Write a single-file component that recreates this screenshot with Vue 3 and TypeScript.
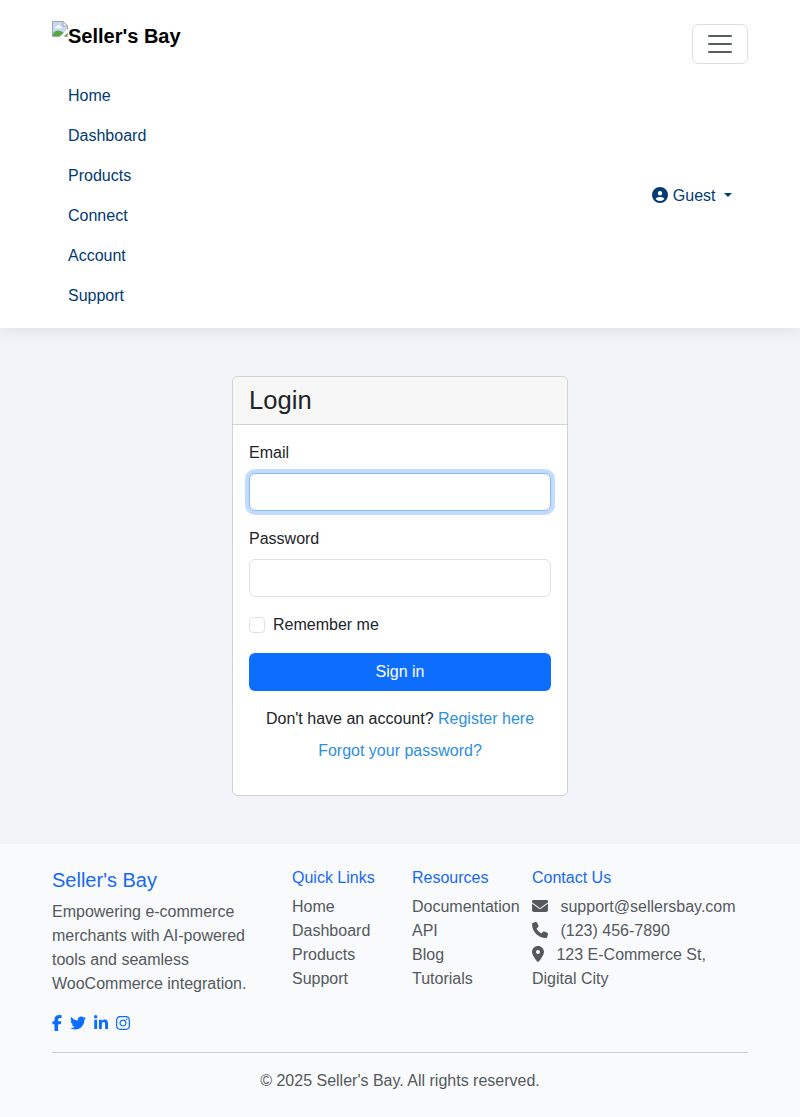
<script setup lang="ts">
interface Icon {
  name: string
  width: number
  path: string
}

interface Contact {
  icon: Icon
  text: string
}

const navLinks: string[] = ['Home', 'Dashboard', 'Products', 'Connect', 'Account', 'Support']

const linkGroups: { title: string; links: string[] }[] = [
  { title: 'Quick Links', links: ['Home', 'Dashboard', 'Products', 'Support'] },
  { title: 'Resources', links: ['Documentation', 'API', 'Blog', 'Tutorials'] },
]

const social: Icon[] = [
  {
    name: 'facebook',
    width: 320,
    path: 'M80 299.3V512H196V299.3h86.5l18-97.8H196V166.9c0-51.7 20.3-71.5 72.7-71.5c16.3 0 29.4 .4 37 1.200V7.900C291.4 4 256.4 0 236.2 0C129.3 0 80 50.500 80 159.4v42.100H14v97.800H80z',
  },
  {
    name: 'twitter',
    width: 512,
    path: 'M459.37 151.716c.325 4.548.325 9.097.325 13.645 0 138.72-105.583 298.558-298.558 298.558-59.452 0-114.68-17.219-161.137-47.106 8.447.974 16.568 1.299 25.34 1.299 49.055 0 94.213-16.568 130.274-44.832-46.132-.975-84.792-31.188-98.112-72.772 6.498.974 12.995 1.624 19.818 1.624 9.421 0 18.843-1.3 27.614-3.573-48.081-9.747-84.143-51.98-84.143-102.985v-1.299c13.969 7.797 30.214 12.67 47.431 13.319-28.264-18.843-46.781-51.005-46.781-87.391 0-19.492 5.197-37.36 14.294-52.954 51.655 63.675 129.3 105.258 216.365 109.807-1.624-7.797-2.599-15.918-2.599-24.04 0-57.828 46.782-104.934 104.934-104.934 30.213 0 57.502 12.67 76.67 33.137 23.715-4.548 46.456-13.32 66.599-25.34-7.798 24.366-24.366 44.833-46.132 57.827 21.117-2.273 41.584-8.122 60.426-16.243-14.292 20.791-32.161 39.308-52.628 54.253z',
  },
  {
    name: 'linkedin',
    width: 448,
    path: 'M100.28 448H7.4V148.9h92.88zM53.79 108.1C24.09 108.1 0 83.5 0 53.8a53.79 53.79 0 0 1 107.58 0c0 29.7-24.1 54.3-53.79 54.3zM447.9 448h-92.68V302.4c0-34.7-.7-79.2-48.29-79.2-48.29 0-55.69 37.7-55.69 76.7V448h-92.78V148.9h89.08v40.8h1.3c12.4-23.5 42.69-48.3 87.88-48.3 94 0 111.28 61.9 111.28 142.3V448z',
  },
  {
    name: 'instagram',
    width: 448,
    path: 'M224.1 141c-63.6 0-114.9 51.3-114.9 114.9s51.3 114.9 114.9 114.9S339 319.5 339 255.9 287.7 141 224.1 141zm0 189.6c-41.1 0-74.7-33.5-74.7-74.7s33.5-74.7 74.7-74.7 74.7 33.5 74.7 74.7-33.6 74.7-74.7 74.7zm146.4-194.3c0 14.9-12 26.8-26.8 26.8-14.9 0-26.8-12-26.8-26.8s12-26.8 26.8-26.8 26.8 12 26.8 26.8zm76.1 27.2c-1.7-35.9-9.9-67.7-36.2-93.9-26.2-26.2-58-34.4-93.9-36.2-37-2.1-147.9-2.1-184.9 0-35.8 1.7-67.6 9.9-93.9 36.1s-34.4 58-36.2 93.9c-2.1 37-2.1 147.9 0 184.9 1.7 35.9 9.9 67.7 36.2 93.9s58 34.4 93.9 36.2c37 2.1 147.9 2.1 184.9 0 35.9-1.7 67.7-9.9 93.9-36.2 26.2-26.2 34.4-58 36.2-93.9 2.1-37 2.1-147.8 0-184.8zM398.8 388c-7.8 19.6-22.9 34.7-42.6 42.6-29.5 11.7-99.5 9-132.1 9s-102.7 2.6-132.1-9c-19.6-7.8-34.7-22.9-42.6-42.6-11.7-29.5-9-99.5-9-132.1s-2.6-102.7 9-132.1c7.8-19.6 22.9-34.7 42.6-42.6 29.5-11.7 99.5-9 132.1-9s102.7-2.6 132.1 9c19.6 7.8 34.7 22.9 42.6 42.6 11.7 29.5 9 99.5 9 132.1s2.7 102.7-9 132.1z',
  },
]

const contacts: Contact[] = [
  {
    icon: {
      name: 'envelope',
      width: 512,
      path: 'M48 64C21.5 64 0 85.5 0 112c0 15.1 7.1 29.3 19.2 38.4L236.8 313.6c11.4 8.5 27 8.5 38.4 0L492.8 150.4c12.1-9.1 19.2-23.3 19.2-38.4c0-26.5-21.5-48-48-48H48zM0 176V384c0 35.3 28.7 64 64 64H448c35.3 0 64-28.7 64-64V176L294.4 339.2c-22.8 17.1-54 17.1-76.8 0L0 176z',
    },
    text: 'support@sellersbay.com',
  },
  {
    icon: {
      name: 'phone',
      width: 512,
      path: 'M164.9 24.6c-7.7-18.6-28-28.5-47.4-23.2l-88 24C12.1 30.2 0 46 0 64C0 311.4 200.6 512 448 512c18 0 33.8-12.1 38.6-29.5l24-88c5.3-19.4-4.6-39.7-23.2-47.4l-96-40c-16.3-6.8-35.2-2.1-46.3 11.6L304.7 368C234.3 334.7 177.3 277.7 144 207.3L193.3 167c13.7-11.2 18.4-30 11.6-46.3l-40-96z',
    },
    text: '(123) 456-7890',
  },
  {
    icon: {
      name: 'location',
      width: 384,
      path: 'M215.7 499.2C267 435 384 279.4 384 192C384 86 298 0 192 0S0 86 0 192c0 87.4 117 243 168.3 307.2c12.3 15.3 35.1 15.3 47.4 0zM192 128a64 64 0 1 1 0 128 64 64 0 1 1 0-128z',
    },
    text: '123 E-Commerce St, Digital City',
  },
]
</script>

<template>
  <div class="page">
    <header class="navbar">
      <div class="bar">
        <a class="brand">
          <svg class="logo" width="16" height="16" viewBox="0 0 16 16" aria-hidden="true">
            <path d="M.5.5H11L15.5 5v3L8 15.5H.5z" fill="#c6d8f5" />
            <path d="M3 7.2c0-1 .8-1.7 1.7-1.7C5 4.600 5.700 4 6.600 4c1.100 0 1.900.8 2 1.800.8 0 1.400.6 1.400 1.400H3z" fill="#fff" />
            <path d="M1 15v-2.500C3 9.800 6 8.700 9.500 10.500L11.800 12l-3.500 3z" fill="#58a942" />
            <path d="M.5 15.500V.5H11L15.500 5v3.500M.5 15.500H8" fill="none" stroke="#a0a4a8" />
            <path d="M11 .5V5h4.500z" fill="#fff" stroke="#a0a4a8" />
            <path d="M7.500 16 16 8v2.500L10.500 16z" fill="#fff" />
            <path d="M12 15.500h3.500V12z" fill="#58a942" stroke="#a0a4a8" stroke-width=".6" />
          </svg><span>Seller's Bay</span>
        </a>
        <button class="toggler" type="button" aria-label="Menu">
          <svg width="30" height="30" viewBox="0 0 30 30">
            <path d="M4 7h22M4 15h22M4 23h22" stroke="#212529" stroke-opacity=".75" stroke-width="2" stroke-linecap="round" stroke-miterlimit="10" />
          </svg>
        </button>
      </div>
      <div class="menu">
        <nav class="nav">
          <a v-for="link in navLinks" :key="link" class="nav-link">{{ link }}</a>
        </nav>
        <a class="nav-link user">
          <svg class="icon" viewBox="0 0 512 512" width="16" height="16">
            <path d="M399 384.2C376.9 345.8 335.4 320 288 320H224c-47.4 0-88.9 25.8-111 64.2c35.2 39.2 86.2 63.8 143 63.8s107.8-24.7 143-63.8zM0 256a256 256 0 1 1 512 0A256 256 0 1 1 0 256zm256 16a72 72 0 1 0 0-144 72 72 0 1 0 0 144z" />
          </svg>
          Guest
          <span class="caret"></span>
        </a>
      </div>
    </header>

    <main class="main">
      <section class="card">
        <h3 class="card-header">Login</h3>
        <form class="card-body" @submit.prevent>
          <div class="field">
            <label for="email">Email</label>
            <input id="email" class="control focused" type="email" />
          </div>
          <div class="field">
            <label for="password">Password</label>
            <input id="password" class="control" type="password" />
          </div>
          <label class="remember"><input class="check" type="checkbox" /><span>Remember me</span></label>
          <button class="submit" type="submit">Sign in</button>
          <div class="help">
            <p>Don't have an account? <a>Register here</a></p>
            <p><a>Forgot your password?</a></p>
          </div>
        </form>
      </section>
    </main>

    <footer class="footer">
      <div class="columns">
        <div class="about">
          <h5>Seller's Bay</h5>
          <p>Empowering e-commerce merchants with AI-powered tools and seamless WooCommerce integration.</p>
          <div class="social">
            <a v-for="icon in social" :key="icon.name" :aria-label="icon.name">
              <svg class="icon" :viewBox="`0 0 ${icon.width} 512`" :width="icon.width / 32" height="16"><path :d="icon.path" /></svg>
            </a>
          </div>
        </div>
        <div v-for="group in linkGroups" :key="group.title">
          <h6>{{ group.title }}</h6>
          <ul>
            <li v-for="link in group.links" :key="link">{{ link }}</li>
          </ul>
        </div>
        <div>
          <h6>Contact Us</h6>
          <ul class="contacts">
            <li v-for="item in contacts" :key="item.text">
              <svg class="icon" :viewBox="`0 0 ${item.icon.width} 512`" :width="item.icon.width / 32" height="16"><path :d="item.icon.path" /></svg>
              {{ item.text }}
            </li>
          </ul>
        </div>
      </div>
      <p class="copyright">© 2025 Seller's Bay. All rights reserved.</p>
    </footer>
  </div>
</template>

<style>
body {
  margin: 0;
  background: #f8fafc;
}
</style>

<style scoped>
.page,
.page * {
  box-sizing: border-box;
}

.page {
  font: 400 16px/1.5 "Liberation Sans", Arial, sans-serif;
  color: #212529;
  background: #f1f3f9;
}

h3,
h5,
h6,
p,
ul {
  margin: 0;
  padding: 0;
  font-weight: 400;
  list-style: none;
}

.icon {
  display: inline-block;
  height: 16px;
  fill: currentColor;
  vertical-align: -2px;
  overflow: visible;
}

.navbar {
  position: relative;
  padding: 12px 52px;
  background: #fff;
  box-shadow: 0 2px 15px rgba(0, 0, 0, 0.08);
}

.bar {
  display: flex;
  justify-content: space-between;
  align-items: flex-start;
  height: 64px;
}

.brand {
  display: flex;
  margin-top: 9px;
  color: #000;
  font-size: 20px;
  font-weight: 700;
  line-height: 30px;
}

.logo {
  flex: none;
}

.toggler {
  display: flex;
  align-items: center;
  justify-content: center;
  width: 56px;
  height: 40px;
  margin-top: 12px;
  padding: 0;
  background: transparent;
  border: 1px solid #dedfe0;
  border-radius: 6px;
}

.menu {
  display: flex;
  align-items: center;
  justify-content: space-between;
}

.nav-link {
  display: block;
  padding: 8px 16px;
  color: #003b75;
}

.caret {
  display: inline-block;
  margin-left: 4px;
  vertical-align: 4px;
  border: 4px solid transparent;
  border-top-color: currentColor;
  border-bottom: 0;
}

.main {
  padding: 48px 0;
}

.card {
  width: 336px;
  margin: 0 auto;
  background: #fff;
  border: 1px solid #d0d2d5;
  border-radius: 6px;
}

.card-header {
  padding: 8px 16px;
  font-size: 25.6px;
  line-height: 1.2;
  background: #f7f7f7;
  border-bottom: 1px solid #d0d1d2;
  border-radius: 5px 5px 0 0;
}

.card-body {
  padding: 16px;
}

.field {
  display: flex;
  flex-direction: column;
  gap: 8px;
  margin-bottom: 16px;
}

.control {
  width: 100%;
  height: 38px;
  padding: 6px 12px;
  font: inherit;
  background: #fff;
  border: 1px solid #dee2e6;
  border-radius: 6px;
  outline: 0;
}

.focused {
  border-color: #86b7fe;
  box-shadow: 0 0 0 4px rgba(13, 110, 253, 0.25);
}

.remember {
  display: flex;
  gap: 8px;
  margin-bottom: 16px;
}

.check {
  appearance: none;
  width: 16px;
  height: 16px;
  margin: 4px 0 0;
  background: #fff;
  border: 1px solid #dee2e6;
  border-radius: 4px;
}

.submit {
  display: block;
  width: 100%;
  height: 38px;
  padding: 0;
  color: #fff;
  font: inherit;
  background: #0d6efd;
  border: 0;
  border-radius: 6px;
}

.help {
  display: grid;
  gap: 8px;
  margin: 16px 0;
  text-align: center;
}

.help a {
  color: #2d8fdd;
}

.footer {
  padding: 24px 52px;
  color: #55595d;
  background: #f8fafc;
}

.columns {
  display: grid;
  grid-template-columns: 216px 96px 96px 216px;
  column-gap: 24px;
}

h5,
h6 {
  margin-bottom: 8px;
  color: #1769f2;
  line-height: 1.2;
}

h5 {
  font-size: 20px;
}

h6 {
  font-size: 16px;
}

.social {
  display: flex;
  gap: 8px;
  margin-top: 16px;
  color: #0d6efd;
}

.contacts .icon {
  margin-right: 8px;
}

.copyright {
  margin-top: 16px;
  padding-top: 16px;
  text-align: center;
  border-top: 1px solid #cfd1d4;
}
</style>
